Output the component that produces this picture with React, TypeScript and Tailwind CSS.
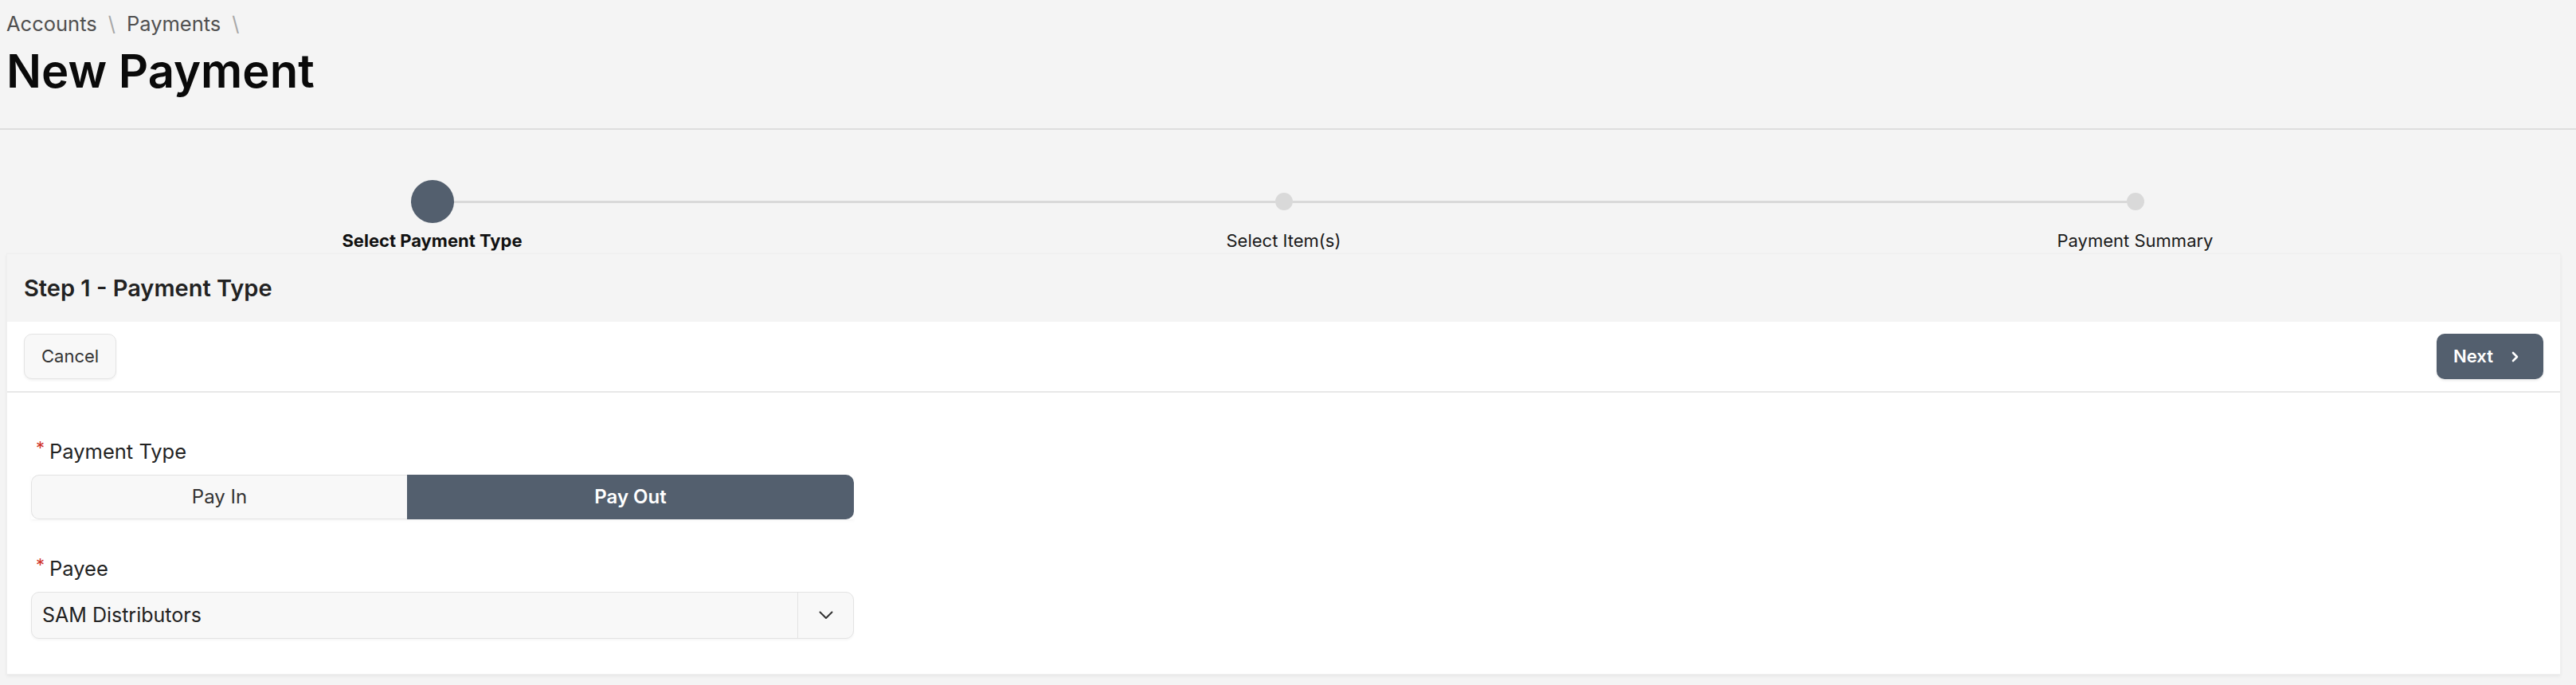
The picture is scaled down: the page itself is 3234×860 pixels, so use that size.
import React, { useState } from "react";

const steps = [
  { label: "Select Payment Type", active: true },
  { label: "Select Item(s)", active: false },
  { label: "Payment Summary", active: false },
];

const Required = ({ children }: { children: React.ReactNode }) => (
  <div className="flex h-[36px] items-center pl-[6px] text-[25.5px] leading-[36px] text-[#222]">
    <span className="mr-[6px] self-start pt-[2px] text-[22px] leading-[22px] text-[#d0342c]">*</span>
    {children}
  </div>
);

export default function App() {
  const [type, setType] = useState<"in" | "out">("out");

  return (
    <div className="min-h-screen bg-[#f4f4f4] font-['Inter','Noto_Sans',sans-serif] antialiased">
      <div className="border-b-2 border-[#dedede] px-[8px] pt-[10px] pb-[40px]">
        <div className="flex h-[40px] items-center text-[25.5px] leading-[40px] text-[#505050]">
          <span>Accounts</span>
          <span className="mx-[14px] text-[#a8a8a8]">\</span>
          <span>Payments</span>
          <span className="mx-[14px] text-[#a8a8a8]">\</span>
        </div>
        <h1 className="mt-[7px] text-[58px] font-semibold leading-[64px] text-[#0a0a0a]">New Payment</h1>
      </div>

      <div className="pl-[8px] pr-[19px]">
        <div className="grid grid-cols-3 pt-[63px] pb-[1px]">
          {steps.map((s, i) => (
            <div key={s.label} className="flex flex-col items-center">
              <div className="flex h-[54px] w-full items-center">
                <div className={`h-[3px] flex-1 ${i === 0 ? "bg-transparent" : "bg-[#d9d9d9]"}`} />
                {s.active ? (
                  <div className="size-[54px] rounded-full bg-[#535f6e]" />
                ) : (
                  <div className="size-[22px] rounded-full bg-[#d9d9d9]" />
                )}
                <div className={`h-[3px] flex-1 ${i === 2 ? "bg-transparent" : "bg-[#d9d9d9]"}`} />
              </div>
              <span
                className={`mt-[7px] text-[22px] leading-[30px] ${
                  s.active ? "font-bold text-[#111]" : "font-normal text-[#1a1a1a]"
                }`}
              >
                {s.label}
              </span>
            </div>
          ))}
        </div>

        <div className="border border-[#efefef] shadow-[0_2px_4px_rgba(0,0,0,0.06)]">
          <div className="flex h-[85px] items-center pl-[21px] text-[29px] font-semibold text-[#222]">
            Step 1 - Payment Type
          </div>

          <div className="flex items-center justify-between border-b-2 border-[#e8e8e8] bg-white px-[21px] py-[15px]">
            <button className="h-[57px] rounded-[10px] border border-[#e4e4e4] bg-[#f8f8f8] px-[21px] text-[22px] text-[#333] shadow-[0_2px_3px_rgba(0,0,0,0.05)]">
              Cancel
            </button>
            <button className="flex h-[57px] items-center rounded-[10px] bg-[#535f6e] pl-[21px] pr-[30px] text-[22px] font-semibold text-white shadow-[0_2px_3px_rgba(0,0,0,0.08)]">
              Next
              <svg className="ml-[23px]" width="10" height="14" viewBox="0 0 10 14" fill="none">
                <path d="M2 2l5 5-5 5" stroke="white" strokeWidth="2.6" strokeLinecap="round" strokeLinejoin="round" />
              </svg>
            </button>
          </div>

          <div className="bg-white px-[30px] pt-[56px] pb-[44px]">
            <Required>Payment Type</Required>
            <div className="mt-[11px] flex h-[56px] w-[1033px] shadow-[0_2px_3px_rgba(0,0,0,0.04)]">
              <button
                onClick={() => setType("in")}
                className={`w-[472px] rounded-l-[10px] text-[24px] ${
                  type === "in"
                    ? "bg-[#535f6e] font-semibold text-white"
                    : "border border-r-0 border-[#e3e3e3] bg-[#f8f8f8] text-[#333]"
                }`}
              >
                Pay In
              </button>
              <button
                onClick={() => setType("out")}
                className={`flex-1 rounded-r-[10px] text-[24px] ${
                  type === "out"
                    ? "bg-[#535f6e] font-semibold text-white"
                    : "border border-l-0 border-[#e3e3e3] bg-[#f8f8f8] text-[#333]"
                }`}
              >
                Pay Out
              </button>
            </div>

            <div className="mt-[44px]">
              <Required>Payee</Required>
            </div>
            <div className="mt-[11px] flex h-[59px] w-[1033px] items-center rounded-[10px] border border-[#e3e3e3] bg-[#f8f8f8] shadow-[0_2px_3px_rgba(0,0,0,0.04)]">
              <span className="flex-1 pl-[13px] text-[25px] text-[#222]">SAM Distributors</span>
              <div className="flex h-full w-[70px] items-center justify-center border-l border-[#e3e3e3]">
                <svg width="18" height="11" viewBox="0 0 18 11" fill="none">
                  <path d="M1.5 1.5l7.5 7.5 7.5-7.5" stroke="#333" strokeWidth="2" strokeLinecap="round" strokeLinejoin="round" />
                </svg>
              </div>
            </div>
          </div>
        </div>
      </div>
    </div>
  );
}
